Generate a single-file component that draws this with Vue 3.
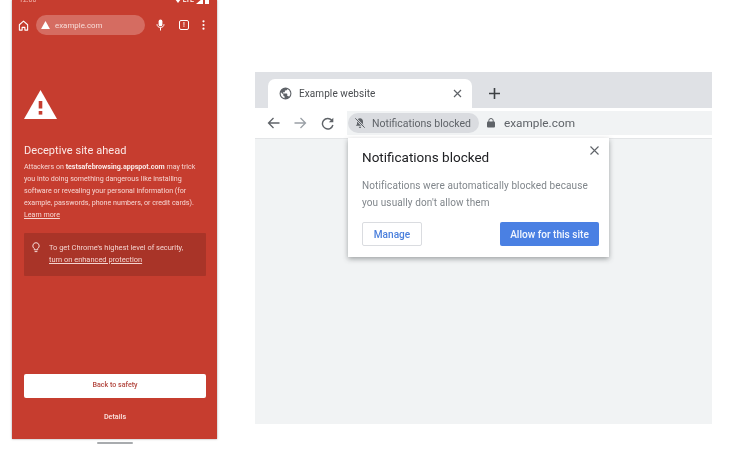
<script setup>
const lines = [
  'you into doing something dangerous like installing',
  'software or revealing your personal information (for',
  'example, passwords, phone numbers, or credit cards).',
]
</script>

<template>
  <div class="page">
    <section class="phone-col">
      <div class="phone">
        <div class="status">
          <span class="time">12:00</span>
          <span class="status-right">
            <svg width="6" height="6" viewBox="0 0 6 6"><path d="M0 1h6L3 5z" fill="#fff" /></svg>
            <span>LTE</span>
            <svg width="7" height="6" viewBox="0 0 7 6"><path d="M0 6L7 0v6z" fill="#fff" /></svg>
            <svg width="4" height="6" viewBox="0 0 4 6"><rect width="4" height="6" fill="#fff" /></svg>
          </span>
        </div>
        <div class="m-toolbar">
          <svg class="m-home" width="11" height="11" viewBox="0 0 12 12"><path d="M6 1.2L1.500 5.200V11h3V8h3v3h3V5.200z" fill="none" stroke="#fff" stroke-width="1.200" stroke-linejoin="round" /></svg>
          <div class="m-pill">
            <svg width="9" height="8" viewBox="0 0 10 9"><path d="M5 0l5 9H0z" fill="#fff" /></svg>
            <span>example.com</span>
          </div>
          <svg class="m-mic" width="9" height="12" viewBox="0 0 9 12"><rect x="2.600" y="0.500" width="3.800" height="6.800" rx="1.900" fill="#fff" /><path d="M1 5.200c0 4.400 7 4.400 7 0M4.500 8.500V11.500" fill="none" stroke="#fff" stroke-width="1" /></svg>
          <span class="m-badge">!</span>
          <svg class="m-dots" width="3" height="10" viewBox="0 0 3 10"><circle cx="1.500" cy="1.300" r="1.100" fill="#fff" /><circle cx="1.500" cy="5" r="1.100" fill="#fff" /><circle cx="1.500" cy="8.700" r="1.100" fill="#fff" /></svg>
        </div>

        <div class="m-body">
          <svg class="m-warn" width="33" height="29" viewBox="0 0 33 29">
            <path d="M16.500 0L33 29H0z" fill="#fff" />
            <rect x="14.700" y="11" width="3.600" height="7.500" fill="#c63d2f" />
            <rect x="14.700" y="21" width="3.600" height="3.600" fill="#c63d2f" />
          </svg>
          <h1 class="m-title">Deceptive site ahead</h1>
          <p class="m-text">
            <span class="m-line">Attackers on <b>testsafebrowsing.appspot.com</b> may trick</span>
            <span v-for="line in lines" :key="line" class="m-line">{{ line }}</span>
            <span class="m-line"><u>Learn more</u></span>
          </p>
          <div class="m-tip">
            <svg class="m-bulb" width="8" height="11" viewBox="0 0 8 11"><path d="M4 .7a3.200 3.200 0 0 0-1.700 5.900v1.200h3.400V6.600A3.200 3.200 0 0 0 4 .7zM2.600 9.600h2.800" fill="none" stroke="#f6dcd8" stroke-width="1" /></svg>
            <p>To get Chrome's highest level of security,<br /><u>turn on enhanced protection</u></p>
          </div>
          <div class="m-spacer"></div>
          <button class="m-back">Back to safety</button>
          <div class="m-details">Details</div>
        </div>
      </div>
      <div class="m-handle"></div>
    </section>

    <section class="browser">
      <div class="tabstrip">
        <div class="tab">
          <svg width="13" height="13" viewBox="0 0 24 24"><path fill="#5f6368" d="M12 1a11 11 0 1 0 0 22 11 11 0 0 0 0-22zM3.200 12c0-.9.100-1.700.400-2.500L8 14v1c0 1.200 1 2.200 2.200 2.200v3.400A8.800 8.800 0 0 1 3.200 12zm15.300 6c-.3-.9-1.100-1.500-2.100-1.500h-1.100v-3.300c0-.6-.5-1.100-1.100-1.100H7.600V9.800h2.200c.6 0 1.100-.5 1.100-1.100V6.500h2.200c1.200 0 2.200-1 2.200-2.200v-.5a8.800 8.800 0 0 1 3.200 14.200z" /></svg>
          <span class="tab-title">Example website</span>
          <svg class="tab-x" width="9" height="9" viewBox="0 0 9 9"><path d="M1 1l7 7M8 1L1 8" stroke="#5f6368" stroke-width="1.200" /></svg>
        </div>
        <svg class="plus" width="11" height="11" viewBox="0 0 11 11"><path d="M5.500 0v11M0 5.500h11" stroke="#3c4043" stroke-width="1.600" /></svg>
      </div>

      <div class="toolbar">
        <div class="nav">
          <svg width="13" height="12" viewBox="0 0 13 12"><path d="M12.500 6H1.500M6.500 1l-5 5 5 5" fill="none" stroke="#5f6368" stroke-width="1.300" /></svg>
          <svg width="13" height="12" viewBox="0 0 13 12"><path d="M.5 6h11M6.500 1l5 5-5 5" fill="none" stroke="#9aa0a6" stroke-width="1.300" /></svg>
          <svg width="13" height="13" viewBox="0 0 13 13"><path d="M10.800 3.300A5.300 5.300 0 1 0 11.900 8" fill="none" stroke="#5f6368" stroke-width="1.400" /><path d="M12.300 .8v4.500H7.800z" fill="#5f6368" /></svg>
        </div>
        <div class="omnibox">
          <div class="chip">
            <svg width="12" height="12" viewBox="0 0 12 12">
              <path d="M6 1.300c-1.800 0-3 1.300-3 3.200v2.800L1.800 8.800h8.400L9 7.300V4.500c0-1.900-1.200-3.200-3-3.200zM4.800 9.700a1.200 1.200 0 0 0 2.400 0z" fill="#5f6368" />
              <path d="M1.300 1.300l9.400 9.400" stroke="#dadce0" stroke-width="2.200" />
              <path d="M1.300 1.300l9.400 9.400" stroke="#5f6368" stroke-width="1" />
            </svg>
            <span>Notifications blocked</span>
          </div>
          <svg class="lock" width="8" height="10" viewBox="0 0 8 10"><path d="M1.800 4V2.700a2.200 2.200 0 0 1 4.400 0V4" fill="none" stroke="#5f6368" stroke-width="1" /><rect y="3.600" width="8" height="6" rx="1" fill="#5f6368" /></svg>
          <span class="url">example.com</span>
        </div>
      </div>

      <div class="content">
        <div class="popup">
          <div class="popup-head">
            <h2>Notifications blocked</h2>
            <svg width="9" height="9" viewBox="0 0 9 9"><path d="M.5.500l8 8M8.500.500l-8 8" stroke="#5f6368" stroke-width="1.100" /></svg>
          </div>
          <p>Notifications were automatically blocked because you usually don't allow them</p>
          <div class="popup-actions">
            <button class="btn-outline">Manage</button>
            <button class="btn-primary">Allow for this site</button>
          </div>
        </div>
      </div>
    </section>
  </div>
</template>

<style scoped>
.page {
  width: 735px;
  height: 449px;
  background: #fff;
  display: flex;
  overflow: hidden;
  font-family: Roboto, "Liberation Sans", sans-serif;
  filter: blur(0.4px);
}
.phone-col {
  width: 205px;
  margin-left: 12px;
  display: flex;
  flex-direction: column;
}
.phone {
  height: 439px;
  background: #c63d2f;
  color: #fff;
  display: flex;
  flex-direction: column;
  box-shadow: 0 0 2px rgba(60, 64, 67, 0.5);
  overflow: hidden;
}
.status {
  height: 5px;
  flex: none;
  padding: 0 8px 0 7px;
  display: flex;
  justify-content: space-between;
  align-items: flex-end;
  font-size: 7px;
  line-height: 9px;
  color: #f2b9b2;
}
.status-right {
  display: flex;
  align-items: center;
  gap: 2px;
  font-weight: 500;
  color: #fff;
}
.m-toolbar {
  height: 20px;
  margin-top: 10px;
  flex: none;
  display: flex;
  align-items: center;
  padding-left: 6px;
}
.m-pill {
  width: 109px;
  height: 20px;
  margin-left: 7px;
  border-radius: 10px;
  background: #d56c61;
  display: flex;
  align-items: center;
  gap: 5px;
  padding-left: 5px;
  box-sizing: border-box;
  font-size: 7.900px;
  color: #f7dcd8;
}
.m-mic {
  margin-left: 11px;
}
.m-badge {
  width: 10px;
  height: 10px;
  margin-left: 14px;
  border: 1px solid #fff;
  border-radius: 2px;
  box-sizing: border-box;
  font-size: 7px;
  line-height: 8px;
  text-align: center;
  font-weight: 500;
}
.m-dots {
  margin-left: 13px;
}
.m-body {
  flex: 1;
  display: flex;
  flex-direction: column;
  padding: 55px 11px 0 12px;
  min-height: 0;
}
.m-warn {
  flex: none;
}
.m-title {
  margin: 24px 0 0;
  font-size: 11px;
  line-height: 15px;
  font-weight: 400;
  color: #fbe9e7;
  letter-spacing: 0.05px;
}
.m-text {
  margin: 3px 0 0;
  font-size: 7.100px;
  line-height: 12px;
  color: #f6d5d1;
}
.m-line {
  display: block;
  white-space: nowrap;
}
.m-text b {
  font-weight: 700;
  color: #fbe9e7;
}
.m-tip {
  margin-top: 12px;
  height: 43px;
  flex: none;
  background: #a93428;
  border-radius: 1px;
  display: flex;
  padding: 9px 0 0 8px;
  box-sizing: border-box;
}
.m-bulb {
  flex: none;
}
.m-tip p {
  margin: 0 0 0 9px;
  font-size: 7.450px;
  line-height: 12px;
  color: #f4d3cf;
}
.m-spacer {
  flex: 1;
}
.m-back {
  height: 24px;
  width: 182px;
  flex: none;
  border: none;
  border-radius: 2px;
  background: #fff;
  color: #b3473f;
  font-family: inherit;
  font-size: 7.100px;
  line-height: 22px;
  font-weight: 500;
  padding: 0 0 2px;
}
.m-details {
  height: 41px;
  flex: none;
  padding-top: 14px;
  box-sizing: border-box;
  text-align: center;
  font-size: 7.200px;
  line-height: 10px;
  font-weight: 500;
  color: #fbe4e1;
}
.m-handle {
  width: 36px;
  height: 2px;
  margin: 3px auto 0;
  border-radius: 1px;
  background: #a8abae;
}
.browser {
  width: 457px;
  height: 352px;
  margin: 72px 0 0 38px;
  display: flex;
  flex-direction: column;
}
.tabstrip {
  height: 36px;
  flex: none;
  background: #dfe1e5;
  display: flex;
  align-items: flex-end;
  padding-left: 13px;
}
.tab {
  width: 204px;
  height: 29px;
  background: #fff;
  border-radius: 7px 7px 0 0;
  display: flex;
  align-items: center;
  padding: 0 10px 0 11px;
  box-sizing: border-box;
}
.tab-title {
  margin-left: 7px;
  font-size: 10px;
  letter-spacing: 0.08px;
  color: #4a4d51;
}
.tab-x {
  margin-left: auto;
}
.plus {
  margin: 0 0 9px 17px;
}
.toolbar {
  height: 30px;
  flex: none;
  background: #fff;
  display: flex;
  align-items: center;
}
.nav {
  width: 92px;
  padding-left: 12px;
  box-sizing: border-box;
  display: flex;
  gap: 14px;
  align-items: center;
  flex: none;
}
.omnibox {
  flex: 1;
  height: 24px;
  background: #f1f3f4;
  display: flex;
  align-items: center;
  padding-left: 1px;
}
.chip {
  width: 131px;
  height: 20px;
  flex: none;
  background: #dadce0;
  border-radius: 10px;
  display: flex;
  align-items: center;
  gap: 6px;
  padding-left: 6px;
  box-sizing: border-box;
  font-size: 10.500px;
  white-space: nowrap;
  color: #5f6368;
}
.lock {
  margin-left: 8px;
}
.url {
  margin-left: 9px;
  font-size: 11.800px;
  color: #5f6368;
}
.content {
  flex: 1;
  background: #f1f3f4;
  border-top: 1px solid #e3e5e7;
  padding-left: 93px;
  display: flex;
  align-items: flex-start;
}
.popup {
  width: 261px;
  height: 119px;
  margin-top: -1px;
  background: #fff;
  box-shadow: 0 2px 5px rgba(60, 64, 67, 0.45);
  padding: 11px 10px 0 14px;
  box-sizing: border-box;
  display: flex;
  flex-direction: column;
}
.popup-head {
  display: flex;
  justify-content: space-between;
  align-items: flex-start;
}
.popup-head h2 {
  margin: 0;
  font-size: 13.500px;
  line-height: 16px;
  font-weight: 400;
  color: #202124;
}
.popup-head svg {
  margin-top: -3px;
}
.popup p {
  margin: 12px 0 0;
  font-size: 10px;
  line-height: 17px;
  letter-spacing: 0.1px;
  color: #80868b;
}
.popup-actions {
  margin-top: 11px;
  display: flex;
  justify-content: space-between;
}
.popup-actions button {
  height: 24px;
  border-radius: 2px;
  font-family: inherit;
  font-size: 10.100px;
  font-weight: 500;
  padding: 0;
}
.btn-outline {
  width: 60px;
  background: #fff;
  color: #4a7fdc;
  border: 1px solid #dadce0;
}
.btn-primary {
  width: 99px;
  background: #4a80e3;
  color: #f2f6fe;
  border: none;
}
</style>
